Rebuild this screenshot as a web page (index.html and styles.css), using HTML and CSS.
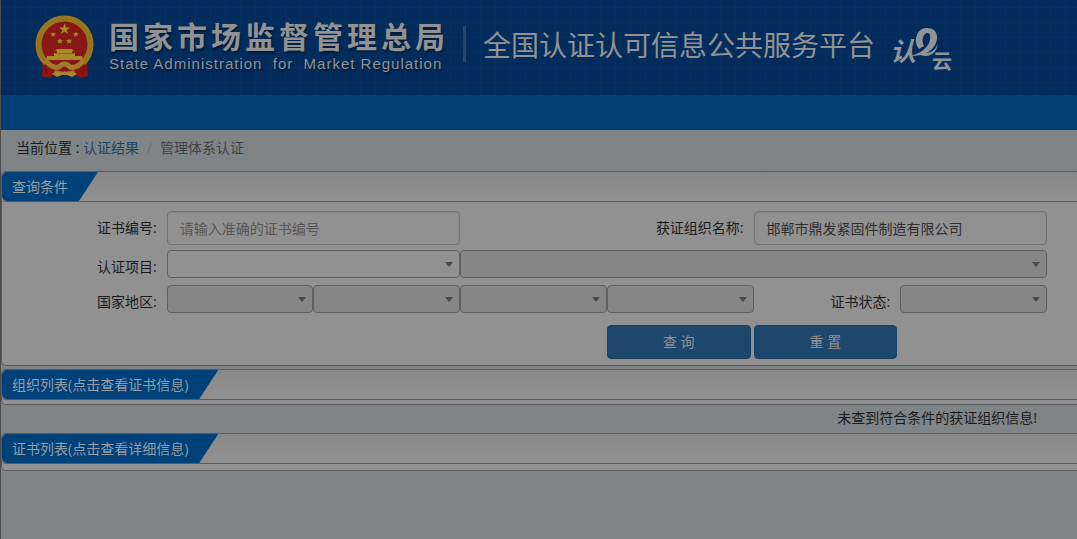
FILE: index.html
```html
<!DOCTYPE html>
<html lang="zh-CN">
<head>
<meta charset="utf-8">
<meta name="viewport" content="width=device-width, initial-scale=1">
<title>全国认证认可信息公共服务平台</title>
<link rel="stylesheet" href="styles.css">
</head>
<body>
<header class="banner">
  <svg class="emblem" viewBox="0 0 60 64" aria-hidden="true">
    <path d="M8 45 L7 61 L15 63 L21 58 L39 58 L45 63 L53 61 L52 45 Z" fill="#8d1412"/>
    <circle cx="29.500" cy="29.500" r="26" fill="#891713" stroke="#94741f" stroke-width="6"/>
    <circle cx="29.500" cy="29.500" r="28" fill="none" stroke="#a08029" stroke-width="1" stroke-dasharray="3 2"/>
    <circle cx="29.500" cy="29.500" r="24" fill="none" stroke="#9c7b29" stroke-width="1" stroke-dasharray="2 2"/>
    <g fill="#a78b2b">
      <path d="M29.500 8.500 L30.900 12.600 L35 12.600 L31.700 15 L33 19 L29.500 16.500 L26 19 L27.300 15 L24 12.600 L28.100 12.600 Z"/>
      <path d="M18 16.500 L18.800 18.500 L21 18.600 L19.300 19.900 L20 22 L18 20.800 L16 21.500 L16.900 19.600 L15.500 18.200 L17.500 18.300 Z"/>
      <path d="M41 16.500 L40.200 18.500 L38 18.600 L39.700 19.900 L39 22 L41 20.800 L43 21.500 L42.100 19.600 L43.500 18.200 L41.500 18.300 Z"/>
      <path d="M25 23 L25.700 25 L28 25.200 L26.200 26.500 L26.700 28.700 L24.800 27.400 L22.700 28.300 L23.500 26.200 L22 24.700 L24.200 24.900 Z"/>
      <path d="M34 23 L33.300 25 L31 25.200 L32.800 26.500 L32.300 28.700 L34.200 27.400 L36.300 28.300 L35.500 26.200 L37 24.700 L34.800 24.900 Z"/>
      <path d="M22 34 H37 L39 36 H37 V38 H40 V41 H47 L48 45 H11 L12 41 H19 V38 H22 V36 H20 Z"/>
    </g>
    <path d="M20 38.500 H39" stroke="#8d5f20" stroke-width="1"/>
    <path d="M10 48 L20 53 L24 49 H35 L39 53 L49 48 L52 61 L44 62 L39 55 L30 57 L20 55 L15 62 L7 61 Z" fill="#8d1412"/>
    <path d="M10 45 Q17 54 24 52 Q29.500 46 35 52 Q42 54 49 45" fill="none" stroke="#a07c2a" stroke-width="5"/>
    <path d="M17 59 L21 56 L27 58 L29.500 56 L32 58 L38 56 L42 59 L37 62 L32 60 H27 L22 62 Z" fill="#a78332"/>
    <path d="M9 50 L12 59 M50 50 L47 59" stroke="#65100e"/>
  </svg>
  <div class="agency">
    <div class="agency-cn">国家市场监督管理总局</div>
    <div class="agency-en">State Administration&nbsp; for&nbsp; Market Regulation</div>
  </div>
  <h1 class="platform">全国认证认可信息公共服务平台</h1>
  <svg class="cloud-logo" viewBox="0 0 64 48" role="img" aria-label="认e云">
    <text class="logo-ren" x="1" y="36">认</text>
    <path fill="#8f9499" d="M30 24 C24 17 27 3 38 3 C50 3 51 16 43 24 C41 26 39 27 37 28 C42 28 46 25 49 19 C47 29 40 33 31 30 L20 32 C28 29 35 26 39 20 C42 15 42 9 39 8 C34 8 32 15 35 21 Z"/>
    <text class="logo-yun" x="43" y="44">云</text>
  </svg>
</header>
<nav class="menu" aria-label="主菜单"></nav>
<div class="crumbs">
  <span class="crumb-lead">当前位置 :&nbsp;</span><a href="#">认证结果</a><span class="crumb-sep">/</span><span class="crumb-now">管理体系认证</span>
</div>
<main>
  <section class="panel">
    <div class="panel-head"><h2 class="tab">查询条件</h2></div>
    <form class="query">
      <label class="label" for="cert-no">证书编号:</label>
      <input class="text wide" id="cert-no" type="text" placeholder="请输入准确的证书编号">
      <label class="label wide" for="org">获证组织名称:</label>
      <input class="text wide" id="org" type="text" value="邯郸市鼎发紧固件制造有限公司">

      <label class="label" for="item">认证项目:</label>
      <select class="pick wide" id="item"><option></option></select>
      <select class="pick rest" aria-label="认证项目子类" disabled><option></option></select>

      <label class="label" for="region">国家地区:</label>
      <select class="pick" id="region" disabled><option></option></select>
      <select class="pick" aria-label="省" disabled><option></option></select>
      <select class="pick" aria-label="市" disabled><option></option></select>
      <select class="pick" aria-label="区县" disabled><option></option></select>
      <label class="label" for="state">证书状态:</label>
      <select class="pick" id="state" disabled><option></option></select>

      <button class="btn first" type="button">查 询</button>
      <button class="btn" type="button">重 置</button>
    </form>
  </section>
  <section class="panel orgs">
    <div class="panel-head"><h2 class="tab">组织列表(点击查看证书信息)</h2></div>
  </section>
  <p class="notice">未查到符合条件的获证组织信息!</p>
  <section class="panel certs">
    <div class="panel-head"><h2 class="tab">证书列表(点击查看详细信息)</h2></div>
  </section>
</main>
</body>
</html>
```
FILE: styles.css
```css
* {
  box-sizing: border-box;
}

html {
  min-height: 100%;
  background: #7f8486;
}

body {
  min-height: 100vh;
  margin: 0;
  border-left: 1px solid #4c4c4c;
  color: #1b1b1b;
  font: 14px/20px "Open Sans", "Noto Sans CJK SC", sans-serif;
}

.banner {
  display: flex;
  align-items: flex-start;
  height: 95px;
  padding: 15px 16px 0 34px;
  background-color: #032c5c;
  background-image:
    repeating-linear-gradient(90deg, transparent 0 14px, #05315e 14px 15px),
    repeating-linear-gradient(180deg, transparent 0 7px, #05315e 7px 8px, transparent 8px 15px);
  color: #929292;
  white-space: nowrap;
}

.emblem {
  flex: none;
  width: 60px;
  height: 64px;
}

.agency {
  padding-left: 14px;
  text-shadow: 1px 2px 2px #011a38;
}

.agency-cn {
  font: bold 30px/40px "Noto Sans CJK SC", sans-serif;
  letter-spacing: 4px;
}

.agency-en {
  font: 15px/18px "Liberation Sans", sans-serif;
  letter-spacing: 1px;
}

.platform {
  margin: 11px 0 0 14px;
  padding-left: 17px;
  border-left: 3px solid #27466d;
  font: 28px/36px "Noto Sans CJK SC", sans-serif;
}

.cloud-logo {
  flex: none;
  width: 64px;
  height: 48px;
  margin: 10px 0 0 14px;
  overflow: visible;
}

.logo-ren,
.logo-yun {
  fill: #8f9499;
  font-family: "Noto Sans CJK SC", sans-serif;
  font-weight: bold;
}

.logo-ren {
  font-size: 26px;
  font-style: italic;
}

.logo-yun {
  font-size: 20px;
}

.menu {
  height: 35px;
  background: #003e74;
}

.crumbs {
  padding: 8px 15px 13px;
}

.crumbs a {
  color: #1d466a;
  text-decoration: none;
}

.crumb-sep {
  padding: 0 8px;
  color: #6d7072;
}

.crumb-now {
  color: #434343;
}

.panel {
  border: 1px solid #585a5b;
  border-right: 0;
  border-radius: 5px 0 0 5px;
  background: #919191;
}

.panel-head {
  border-bottom: 1px solid #585858;
  border-radius: 4px 0 0 4px;
  background: linear-gradient(#888888, #919191);
}

.tab {
  width: fit-content;
  margin: 0;
  padding: 0 30px 0 10px;
  border-radius: 5px 0 0 5px;
  background: #00417a;
  clip-path: polygon(0 0, 100% 0, calc(100% - 19px) 100%, 0 100%);
  color: #979da3;
  font-size: 14px;
  font-weight: normal;
  line-height: 29px;
}

.query {
  display: grid;
  grid-template-columns: repeat(7, minmax(0, 1fr));
  align-items: start;
  padding: 9px 30px 6px 18px;
}

.label {
  padding: 7px 10px 0 0;
  text-align: right;
}

.wide {
  grid-column: span 2;
}

.rest {
  grid-column: span 4;
}

.text {
  width: 100%;
  height: 34px;
  margin-bottom: 5px;
  padding: 0 12px;
  border: 1px solid #737373;
  border-radius: 4px;
  background: #919191;
  box-shadow: inset 0 1px 1px #858585;
  color: #303030;
  font: inherit;
}

.text::placeholder {
  color: #575757;
  opacity: 1;
}

.pick {
  width: 100%;
  height: 28px;
  margin-bottom: 7px;
  padding: 0 24px 0 8px;
  border: 1px solid #606060;
  border-radius: 4px;
  background: #919191 url("data:image/svg+xml,%3Csvg xmlns='http://www.w3.org/2000/svg' width='8' height='5'%3E%3Cpath d='M0 0H8L4 5Z' fill='%234a4a4a'/%3E%3C/svg%3E") no-repeat right 6px center;
  appearance: none;
  opacity: 1;
  font: inherit;
}

.pick:disabled {
  background-color: #868686;
}

.btn {
  height: 34px;
  margin: 5px 3px 0 0;
  padding: 0;
  border: 1px solid #1a3f61;
  border-radius: 4px;
  background: #1d476c;
  color: #929292;
  font: inherit;
}

.first {
  grid-column: 5;
}

.orgs {
  margin-top: 3px;
  padding-bottom: 4px;
}

.notice {
  margin: 0;
  padding: 3px 40px 5px 0;
  text-align: right;
}

.certs {
  padding-bottom: 6px;
}
```
